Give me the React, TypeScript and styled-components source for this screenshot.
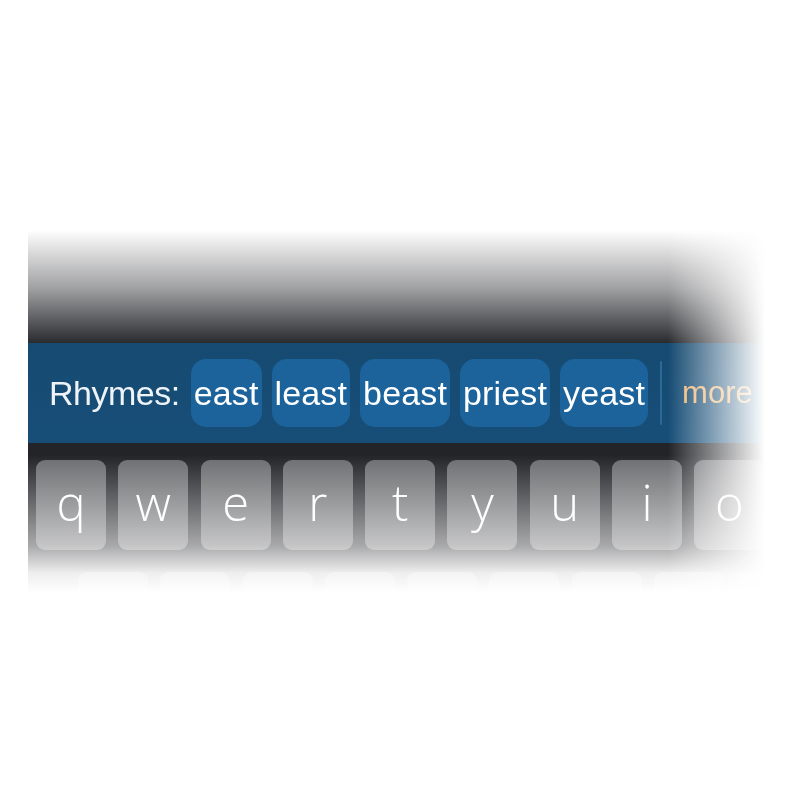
import React from "react";
import styled, { createGlobalStyle } from "styled-components";

const Global = createGlobalStyle`
  html, body { margin: 0; padding: 0; background: #ffffff; }
  body { font-family: "Liberation Sans", Arial, sans-serif; }
`;

const Page = styled.div`
  width: 800px;
  height: 800px;
  padding: 225px 0 0 28px;
  box-sizing: border-box;
  background: #ffffff;
`;

const fadeY = `linear-gradient(
    to bottom,
    rgba(0, 0, 0, 0) 0px,
    rgba(0, 0, 0, 0) 5px,
    rgba(0, 0, 0, 0.45) 64px,
    #000 118px,
    #000 230px,
    rgba(0, 0, 0, 0.4) 320px,
    rgba(0, 0, 0, 0.08) 348px,
    rgba(0, 0, 0, 0) 367px
  )`;
const fadeX = `linear-gradient(to right, #000 640px, rgba(0, 0, 0, 0) 737px)`;

const Panel = styled.div`
  width: 752px;
  height: 375px;
  display: flex;
  flex-direction: column;
  overflow: hidden;
  background: #232428;
  -webkit-mask-image: ${fadeY}, ${fadeX};
  -webkit-mask-composite: source-in;
  mask-image: ${fadeY}, ${fadeX};
  mask-composite: intersect;
`;

const TopShade = styled.div`
  height: 118px;
  flex: none;
  background: #2a2b2f;
`;

const SuggestionBar = styled.div`
  height: 100px;
  flex: none;
  display: flex;
  align-items: center;
  padding-left: 21px;
  background: linear-gradient(to bottom, #164a71, #174e78);
  font-size: 34px;
  color: #eef3f8;
`;

const Label = styled.span`
  margin-right: 11px;
  letter-spacing: -0.5px;
`;

const Chip = styled.span`
  height: 68px;
  display: inline-flex;
  align-items: center;
  padding: 0 3px;
  margin-right: 10px;
  border-radius: 15px;
  background: #1b639a;
  color: #ffffff;
  letter-spacing: 0.15px;
`;

const Separator = styled.span`
  width: 2px;
  height: 64px;
  margin: 0 20px 0 2px;
  background: #2a6a99;
  border-radius: 1px;
`;

const More = styled.span`
  color: #efb878;
  font-size: 31px;
`;

const Keyboard = styled.div`
  flex: 1;
  display: flex;
  flex-direction: column;
  gap: 22px;
  padding-top: 17px;
  background: #232428;
`;

const KeyRow = styled.div<{ $indent: number }>`
  display: flex;
  gap: 12.3px;
  padding-left: ${(p) => p.$indent}px;
`;

const Key = styled.div`
  width: 70px;
  height: 90px;
  flex: none;
  border-radius: 9px;
  background: #6c6d70;
  display: flex;
  align-items: center;
  justify-content: center;
  font-family: "Open Sans", "Liberation Sans", sans-serif;
  font-weight: 300;
  font-size: 49px;
  color: #ffffff;
  padding-bottom: 6px;
  box-sizing: border-box;
`;

const words = ["east", "least", "beast", "priest", "yeast"];
const row1 = ["q", "w", "e", "r", "t", "y", "u", "i", "o"];
const row2Count = 9;

export default function App() {
  return (
    <>
      <Global />
      <Page>
        <Panel>
          <TopShade />
          <SuggestionBar>
            <Label>Rhymes:</Label>
            {words.map((w) => (
              <Chip key={w}>{w}</Chip>
            ))}
            <Separator />
            <More>more</More>
          </SuggestionBar>
          <Keyboard>
            <KeyRow $indent={8}>
              {row1.map((k) => (
                <Key key={k}>{k}</Key>
              ))}
            </KeyRow>
            <KeyRow $indent={50}>
              {Array.from({ length: row2Count }, (_, i) => (
                <Key key={i} />
              ))}
            </KeyRow>
          </Keyboard>
        </Panel>
      </Page>
    </>
  );
}
